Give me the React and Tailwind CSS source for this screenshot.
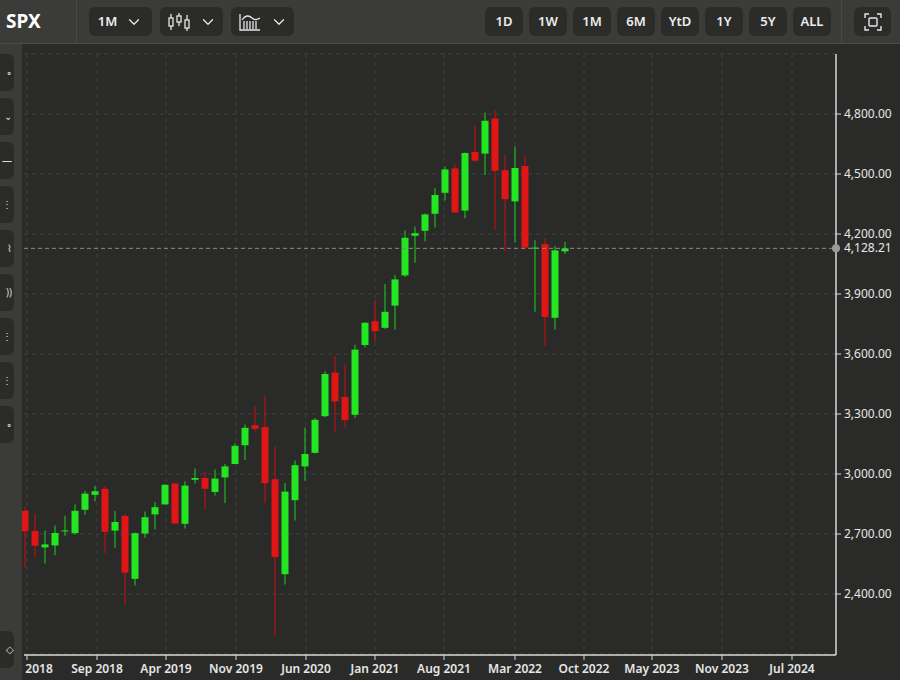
import { ChevronDown } from 'lucide-react'

// monthly OHLC, Feb 2018 .. Aug 2022
const bars = [
  [2816, 2835, 2533, 2714], [2715, 2801, 2585, 2641], [2633, 2717, 2553, 2648], [2643, 2742, 2594, 2705],
  [2718, 2791, 2691, 2718], [2704, 2848, 2698, 2816], [2821, 2916, 2796, 2902], [2896, 2941, 2864, 2914],
  [2926, 2940, 2604, 2711], [2717, 2815, 2631, 2760], [2790, 2800, 2346, 2507], [2476, 2708, 2443, 2704],
  [2702, 2813, 2681, 2784], [2798, 2860, 2722, 2834], [2848, 2950, 2848, 2946], [2952, 2955, 2751, 2752],
  [2751, 2964, 2728, 2942], [2971, 3028, 2952, 2980], [2980, 3014, 2822, 2926], [2910, 3022, 2892, 2977],
  [2983, 3050, 2855, 3038], [3050, 3154, 3050, 3141], [3144, 3247, 3070, 3231], [3244, 3338, 3214, 3226],
  [3235, 3394, 2855, 2954], [2974, 3137, 2192, 2585], [2499, 2955, 2447, 2912], [2869, 3068, 2767, 3044],
  [3038, 3233, 2966, 3100], [3106, 3280, 3102, 3271], [3289, 3514, 3284, 3500], [3507, 3588, 3209, 3363],
  [3385, 3550, 3234, 3270], [3296, 3646, 3280, 3622], [3645, 3760, 3633, 3756], [3764, 3871, 3662, 3714],
  [3731, 3950, 3725, 3811], [3842, 3994, 3723, 3973], [3993, 4218, 3985, 4181], [4191, 4238, 4056, 4204],
  [4216, 4302, 4164, 4298], [4301, 4429, 4233, 4395], [4406, 4537, 4368, 4523], [4528, 4546, 4305, 4308],
  [4317, 4608, 4279, 4605], [4610, 4743, 4560, 4567], [4602, 4808, 4495, 4766], [4778, 4818, 4223, 4516],
  [4519, 4595, 4115, 4374], [4363, 4637, 4157, 4530], [4540, 4593, 4124, 4132], [4130, 4169, 3811, 4132],
  [4149, 4177, 3637, 3785], [3781, 4140, 3723, 4118], [4113, 4160, 4100, 4128],
]

const prices = [4800, 4500, 4200, 3900, 3600, 3300, 3000, 2700, 2400]
const months = [
  ['Feb 2018', 5], ['Sep 2018', 75], ['Apr 2019', 144], ['Nov 2019', 214], ['Jun 2020', 284],
  ['Jan 2021', 353], ['Aug 2021', 422], ['Mar 2022', 493], ['Oct 2022', 562], ['May 2023', 630],
  ['Nov 2023', 700], ['Jul 2024', 770],
]
// chart-local coords: svg starts at x=22, y=44
const py = (p) => 70 + (4800 - p) / 5
const fmt = (n) => n.toLocaleString('en-US', { minimumFractionDigits: 2 })

function Chart() {
  const axisX = 814
  return (
    <svg width="878" height="636" className="block" style={{ fontFamily: '"Noto Sans", sans-serif' }}>
      {/* grid */}
      {[...Array(11)].map((_, i) => (
        <line key={'h' + i} x1="2" x2={axisX} y1={10 + i * 60} y2={10 + i * 60} stroke="#3e3f3c" strokeDasharray="4 4" />
      ))}
      {months.map(([, x], i) => (
        <line key={'v' + i} x1={x} x2={x} y1="10" y2="611" stroke="#3e3f3c" strokeDasharray="4 4" />
      ))}
      {/* candles */}
      {bars.map(([o, h, l, c], i) => {
        const x = 3 + i * 10
        const up = c >= o
        const col = up ? '#22e622' : '#e01515'
        const top = py(Math.max(o, c))
        const bh = Math.max(1, Math.abs(py(o) - py(c)))
        return (
          <g key={i}>
            <line x1={x} x2={x} y1={py(h)} y2={py(l)} stroke={up ? '#1fb81f' : '#b81212'} strokeWidth="1.2" />
            <rect x={x - 3.5} y={top} width="7" height={bh} fill={col} />
          </g>
        )
      })}
      {/* current price */}
      <line x1="2" x2={axisX} y1={py(4128.21)} y2={py(4128.21)} stroke="#8a8a88" strokeDasharray="4 3" />
      {/* axes */}
      <line x1={axisX} x2={axisX} y1="10" y2="611" stroke="#d8d8d8" strokeWidth="1.5" />
      <line x1="2" x2={axisX} y1="611" y2="611" stroke="#d8d8d8" strokeWidth="1.5" />
      {prices.map((p) => (
        <g key={p}>
          <line x1={axisX} x2={axisX + 5} y1={py(p)} y2={py(p)} stroke="#d8d8d8" />
          <text x={axisX + 8} y={py(p) + 4} fill="#e6e6e6" fontSize="12">{fmt(p)}</text>
        </g>
      ))}
      <rect x={axisX + 12} y={py(4128.21) - 7} width="50" height="14" fill="#2a2b29" />
      <circle cx={axisX} cy={py(4128.21)} r="4" fill="#9a9a98" />
      <text x={axisX + 8} y={py(4128.21) + 4} fill="#e6e6e6" fontSize="12">4,128.21</text>
      {months.map(([m, x]) => (
        <g key={m}>
          <line x1={x} x2={x} y1="611" y2="616" stroke="#d8d8d8" />
          <text x={x} y="629" fill="#e6e6e6" fontSize="12" fontWeight="600" textAnchor="middle">{m}</text>
        </g>
      ))}
    </svg>
  )
}

function CandleIcon() {
  return (
    <svg width="24" height="20" viewBox="0 0 24 20" fill="none" stroke="#e6e6e6" strokeWidth="1.3">
      <line x1="4" x2="4" y1="2" y2="18" /><rect x="2" y="6" width="4" height="8" fill="#2b2c2a" />
      <line x1="12" x2="12" y1="1" y2="14" /><rect x="10" y="4" width="4" height="6" fill="#2b2c2a" />
      <line x1="20" x2="20" y1="3" y2="19" /><rect x="18" y="8" width="4" height="8" fill="#2b2c2a" />
    </svg>
  )
}

function IndicatorIcon() {
  return (
    <svg width="24" height="20" viewBox="0 0 24 20" fill="none" stroke="#e6e6e6" strokeWidth="1.3">
      <path d="M2 2v16h20" />
      {[6, 9, 12, 15, 18].map((x) => <line key={x} x1={x} x2={x} y1="9" y2="17" />)}
      <path d="M4 8c4-6 8-4 10-2s5 2 8 0" />
    </svg>
  )
}

function FullscreenIcon() {
  return (
    <svg width="20" height="20" viewBox="0 0 20 20" fill="none" stroke="#e6e6e6" strokeWidth="1.4">
      <path d="M2 6V2h4M14 2h4v4M18 14v4h-4M6 18H2v-4" />
      <rect x="6" y="6" width="8" height="8" rx="1" />
    </svg>
  )
}

const Btn = ({ children, className = '' }) => (
  <div className={'flex h-[29px] items-center justify-center rounded-md bg-[#2b2c2a] text-[13px] font-semibold text-[#ececec] ' + className}>
    {children}
  </div>
)

export default function App() {
  return (
    <div className="flex h-[680px] w-[900px] flex-col overflow-hidden bg-[#2a2b29]" style={{ fontFamily: '"Noto Sans", sans-serif' }}>
      <header className="flex h-[44px] shrink-0 items-center border-b border-[#4a4b48] bg-[#3b3c3a]">
        <div className="flex h-full w-[77px] items-center border-r border-[#4a4b48] pl-[6px] text-[19px] font-bold text-white">SPX</div>
        <div className="ml-[12px] flex gap-2">
          <Btn className="w-[63px] gap-2">1M <ChevronDown size={18} strokeWidth={1.6} /></Btn>
          <Btn className="w-[63px] gap-2"><CandleIcon /><ChevronDown size={18} strokeWidth={1.6} /></Btn>
          <Btn className="w-[63px] gap-2"><IndicatorIcon /><ChevronDown size={18} strokeWidth={1.6} /></Btn>
        </div>
        <div className="ml-auto flex gap-[6px]">
          {['1D', '1W', '1M', '6M', 'YtD', '1Y', '5Y', 'ALL'].map((t) => (
            <Btn key={t} className="w-[38px]">{t}</Btn>
          ))}
        </div>
        <div className="ml-[10px] flex h-full items-center border-l border-[#4a4b48] pl-[12px] pr-[9px]">
          <Btn className="w-[37px]"><FullscreenIcon /></Btn>
        </div>
      </header>
      <div className="flex flex-1">
        <aside className="flex w-[22px] shrink-0 flex-col gap-[7px] bg-[#3b3c3a] pt-[10px]">
          {['∘', '⌄', '—', '⋮', '⌇', '))', '⋮', '⋮', '∘'].map((g, i) => (
            <div key={i} className="flex h-[37px] w-[14px] items-center justify-end rounded-r-md bg-[#2b2c2a] pr-[2px] text-[10px] text-[#ddd]">{g}</div>
          ))}
          <div className="mt-auto mb-[12px] flex h-[37px] w-[14px] items-center justify-end rounded-r-md bg-[#2b2c2a] text-[10px] text-[#ddd]">◇</div>
        </aside>
        <main className="flex-1">
          <Chart />
        </main>
      </div>
    </div>
  )
}
